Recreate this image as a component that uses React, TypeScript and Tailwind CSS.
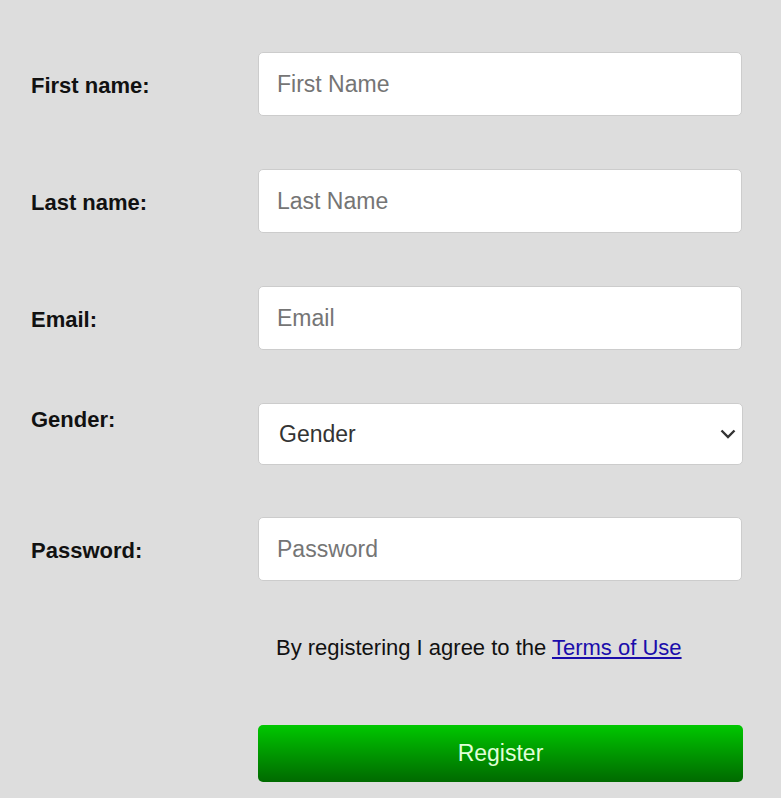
import React from "react";

const labelCls = "w-[258px] shrink-0 pl-[31px] pt-[3px] text-[22px] leading-[25px] font-bold text-[#111111]";
const inputCls =
  "w-[484px] h-[64px] bg-white border border-[#cccccc] rounded-[5px] pl-[18px] pt-[1px] text-[23px] text-[#333333] placeholder:text-[#757575] outline-none";

export default function App() {
  return (
    <div
      className="min-h-screen bg-[#dddddd] pt-[52px]"
      style={{ fontFamily: '"Liberation Sans", Arial, sans-serif' }}
    >
      <div className="flex items-center">
        <label className={labelCls}>First name:</label>
        <input className={inputCls} placeholder="First Name" />
      </div>
      <div className="flex items-center mt-[53px]">
        <label className={labelCls}>Last name:</label>
        <input className={inputCls} placeholder="Last Name" />
      </div>
      <div className="flex items-center mt-[53px]">
        <label className={labelCls}>Email:</label>
        <input className={inputCls} placeholder="Email" />
      </div>
      <div className="flex items-start mt-[53px]">
        <label className="w-[258px] shrink-0 pl-[31px] pt-[4px] text-[22px] leading-[25px] font-bold text-[#111111]">
          Gender:
        </label>
        <div className="relative">
          <select
            className="appearance-none w-[485px] h-[62px] bg-white border border-[#cccccc] rounded-[5px] pl-[20px] pt-[1px] text-[23px] text-[#333333] outline-none"
            defaultValue=""
          >
            <option value="">Gender</option>
            <option value="m">Male</option>
            <option value="f">Female</option>
          </select>
          <svg
            className="absolute right-[7px] top-[26px] pointer-events-none"
            width="16"
            height="10"
            viewBox="0 0 16 10"
          >
            <path d="M1.5 1.5 L8 8 L14.5 1.5" fill="none" stroke="#333" strokeWidth="2.4" />
          </svg>
        </div>
      </div>
      <div className="flex items-center mt-[52px]">
        <label className={labelCls}>Password:</label>
        <input className={inputCls} type="password" placeholder="Password" />
      </div>
      <div className="mt-[54px] pl-[276px] text-[22px] leading-[25px] text-[#111111]">
        By registering I agree to the{" "}
        <a href="#" className="text-[#1a0dab] underline">
          Terms of Use
        </a>
      </div>
      <div className="mt-[65px] pl-[258px]">
        <button className="w-[485px] h-[57px] rounded-[5px] bg-gradient-to-b from-[#00c800] to-[#006a00] text-[23px] text-[#e0ffd8]">
          Register
        </button>
      </div>
    </div>
  );
}
